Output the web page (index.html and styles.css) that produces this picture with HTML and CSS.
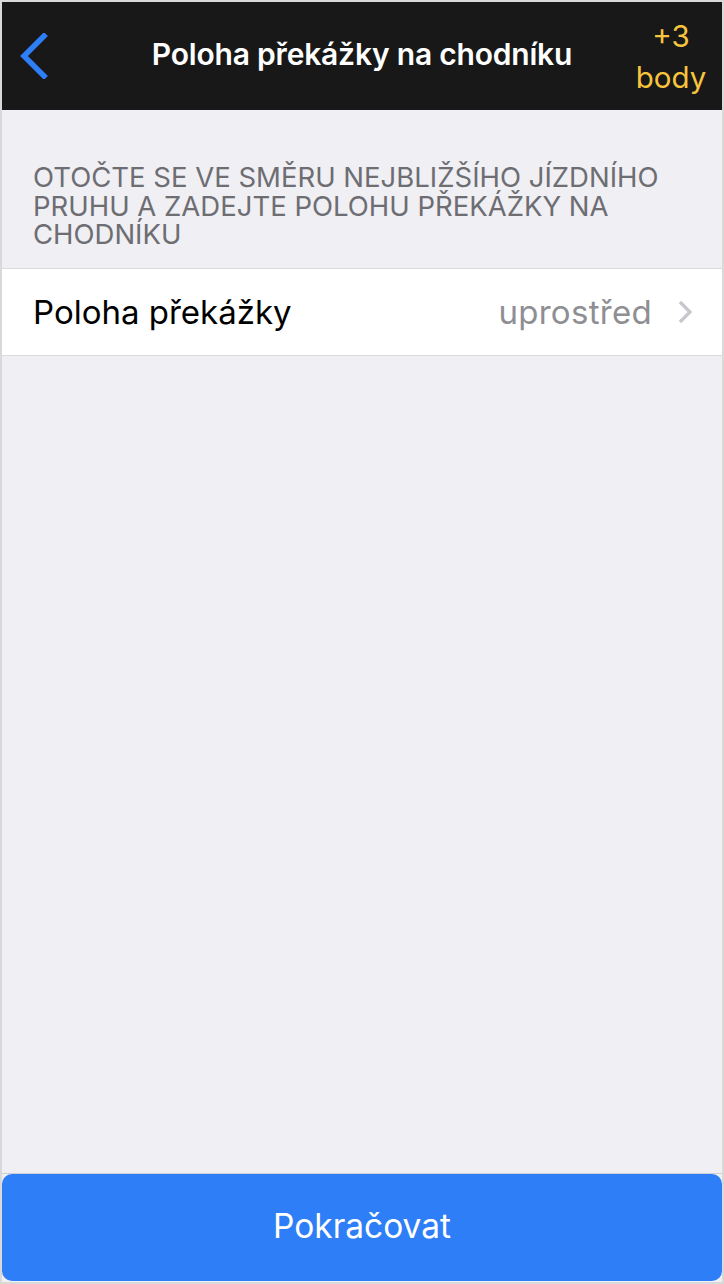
FILE: index.html
```html
<!DOCTYPE html>
<html lang="cs">
<head>
    <meta charset="UTF-8">
    <meta name="viewport" content="width=device-width, initial-scale=1.0">
    <title>Poloha překážky na chodníku</title>
    <link rel="stylesheet" href="styles.css">
</head>
<body>
    <div class="screen">
        <header class="nav-bar">
            <button class="back-button" aria-label="Zpět">
                <svg width="30" height="46" viewBox="0 0 30 46">
                    <path d="M26 3 L6 23 L26 43" fill="none" stroke="#2d7ef7" stroke-width="5.5" stroke-linecap="square" stroke-linejoin="miter"/>
                </svg>
            </button>
            <h1 class="nav-title">Poloha překážky na chodníku</h1>
            <div class="points">+3<br>body</div>
        </header>

        <main class="content">
            <p class="section-header">Otočte se ve směru nejbližšího jízdního pruhu a zadejte polohu překážky na chodníku</p>
            <div class="table-row">
                <span class="row-label">Poloha překážky</span>
                <span class="row-value">uprostřed</span>
                <svg class="row-chevron" width="14" height="24" viewBox="0 0 14 24">
                    <path d="M2 2 L12 12 L2 22" fill="none" stroke="#c7c7cc" stroke-width="3.2"/>
                </svg>
            </div>
        </main>

        <footer class="footer">
            <button class="continue-button">Pokračovat</button>
        </footer>
    </div>
</body>
</html>
```

FILE: styles.css
```css
html, body {
    margin: 0;
    padding: 0;
}

body {
    background: #fff;
    font-family: 'Inter', 'Roboto', sans-serif;
}

.screen {
    width: 720px;
    height: 1280px;
    border: 2px solid #d9d9d9;
    display: flex;
    flex-direction: column;
    background-color: #efeff4;
}

.nav-bar {
    height: 108px;
    background-color: #181818;
    display: flex;
    align-items: center;
}

.back-button {
    background: none;
    border: none;
    padding: 0;
    margin-left: 16px;
    width: 32px;
    height: 46px;
    display: flex;
    cursor: pointer;
}

.nav-title {
    flex: 1;
    margin: 0 0 4px;
    padding-left: 40px;
    text-align: center;
    color: #fff;
    font-size: 30px;
    font-weight: 600;
    letter-spacing: -0.2px;
    white-space: nowrap;
}

.points {
    color: #f7c43d;
    font-size: 29.5px;
    line-height: 41px;
    text-align: center;
    width: 74px;
    margin-right: 14px;
    margin-top: 2px;
}

.content {
    flex: 1;
}

.section-header {
    margin: 53px 30px 19px 31px;
    color: #6d6d72;
    font-size: 27.5px;
    line-height: 28.5px;
    text-transform: uppercase;
}

.table-row {
    background-color: #fff;
    border-top: 1px solid #d9d9de;
    border-bottom: 1px solid #d9d9de;
    height: 86px;
    display: flex;
    align-items: center;
    padding: 0 30px 0 31px;
}

.row-label {
    flex: 1;
    font-size: 33px;
    color: #000;
}

.row-value {
    font-size: 33px;
    letter-spacing: 0.3px;
    color: #8e8e93;
    margin-right: 26px;
}

.footer {
    border-top: 1px solid #d0d0d4;
    padding-bottom: 1px;
}

.continue-button {
    display: block;
    width: 100%;
    height: 107px;
    border: none;
    border-radius: 10px;
    background-color: #2d7ef7;
    color: #fff;
    font-family: inherit;
    font-size: 33.5px;
    padding-bottom: 4px;
    cursor: pointer;
}
```
